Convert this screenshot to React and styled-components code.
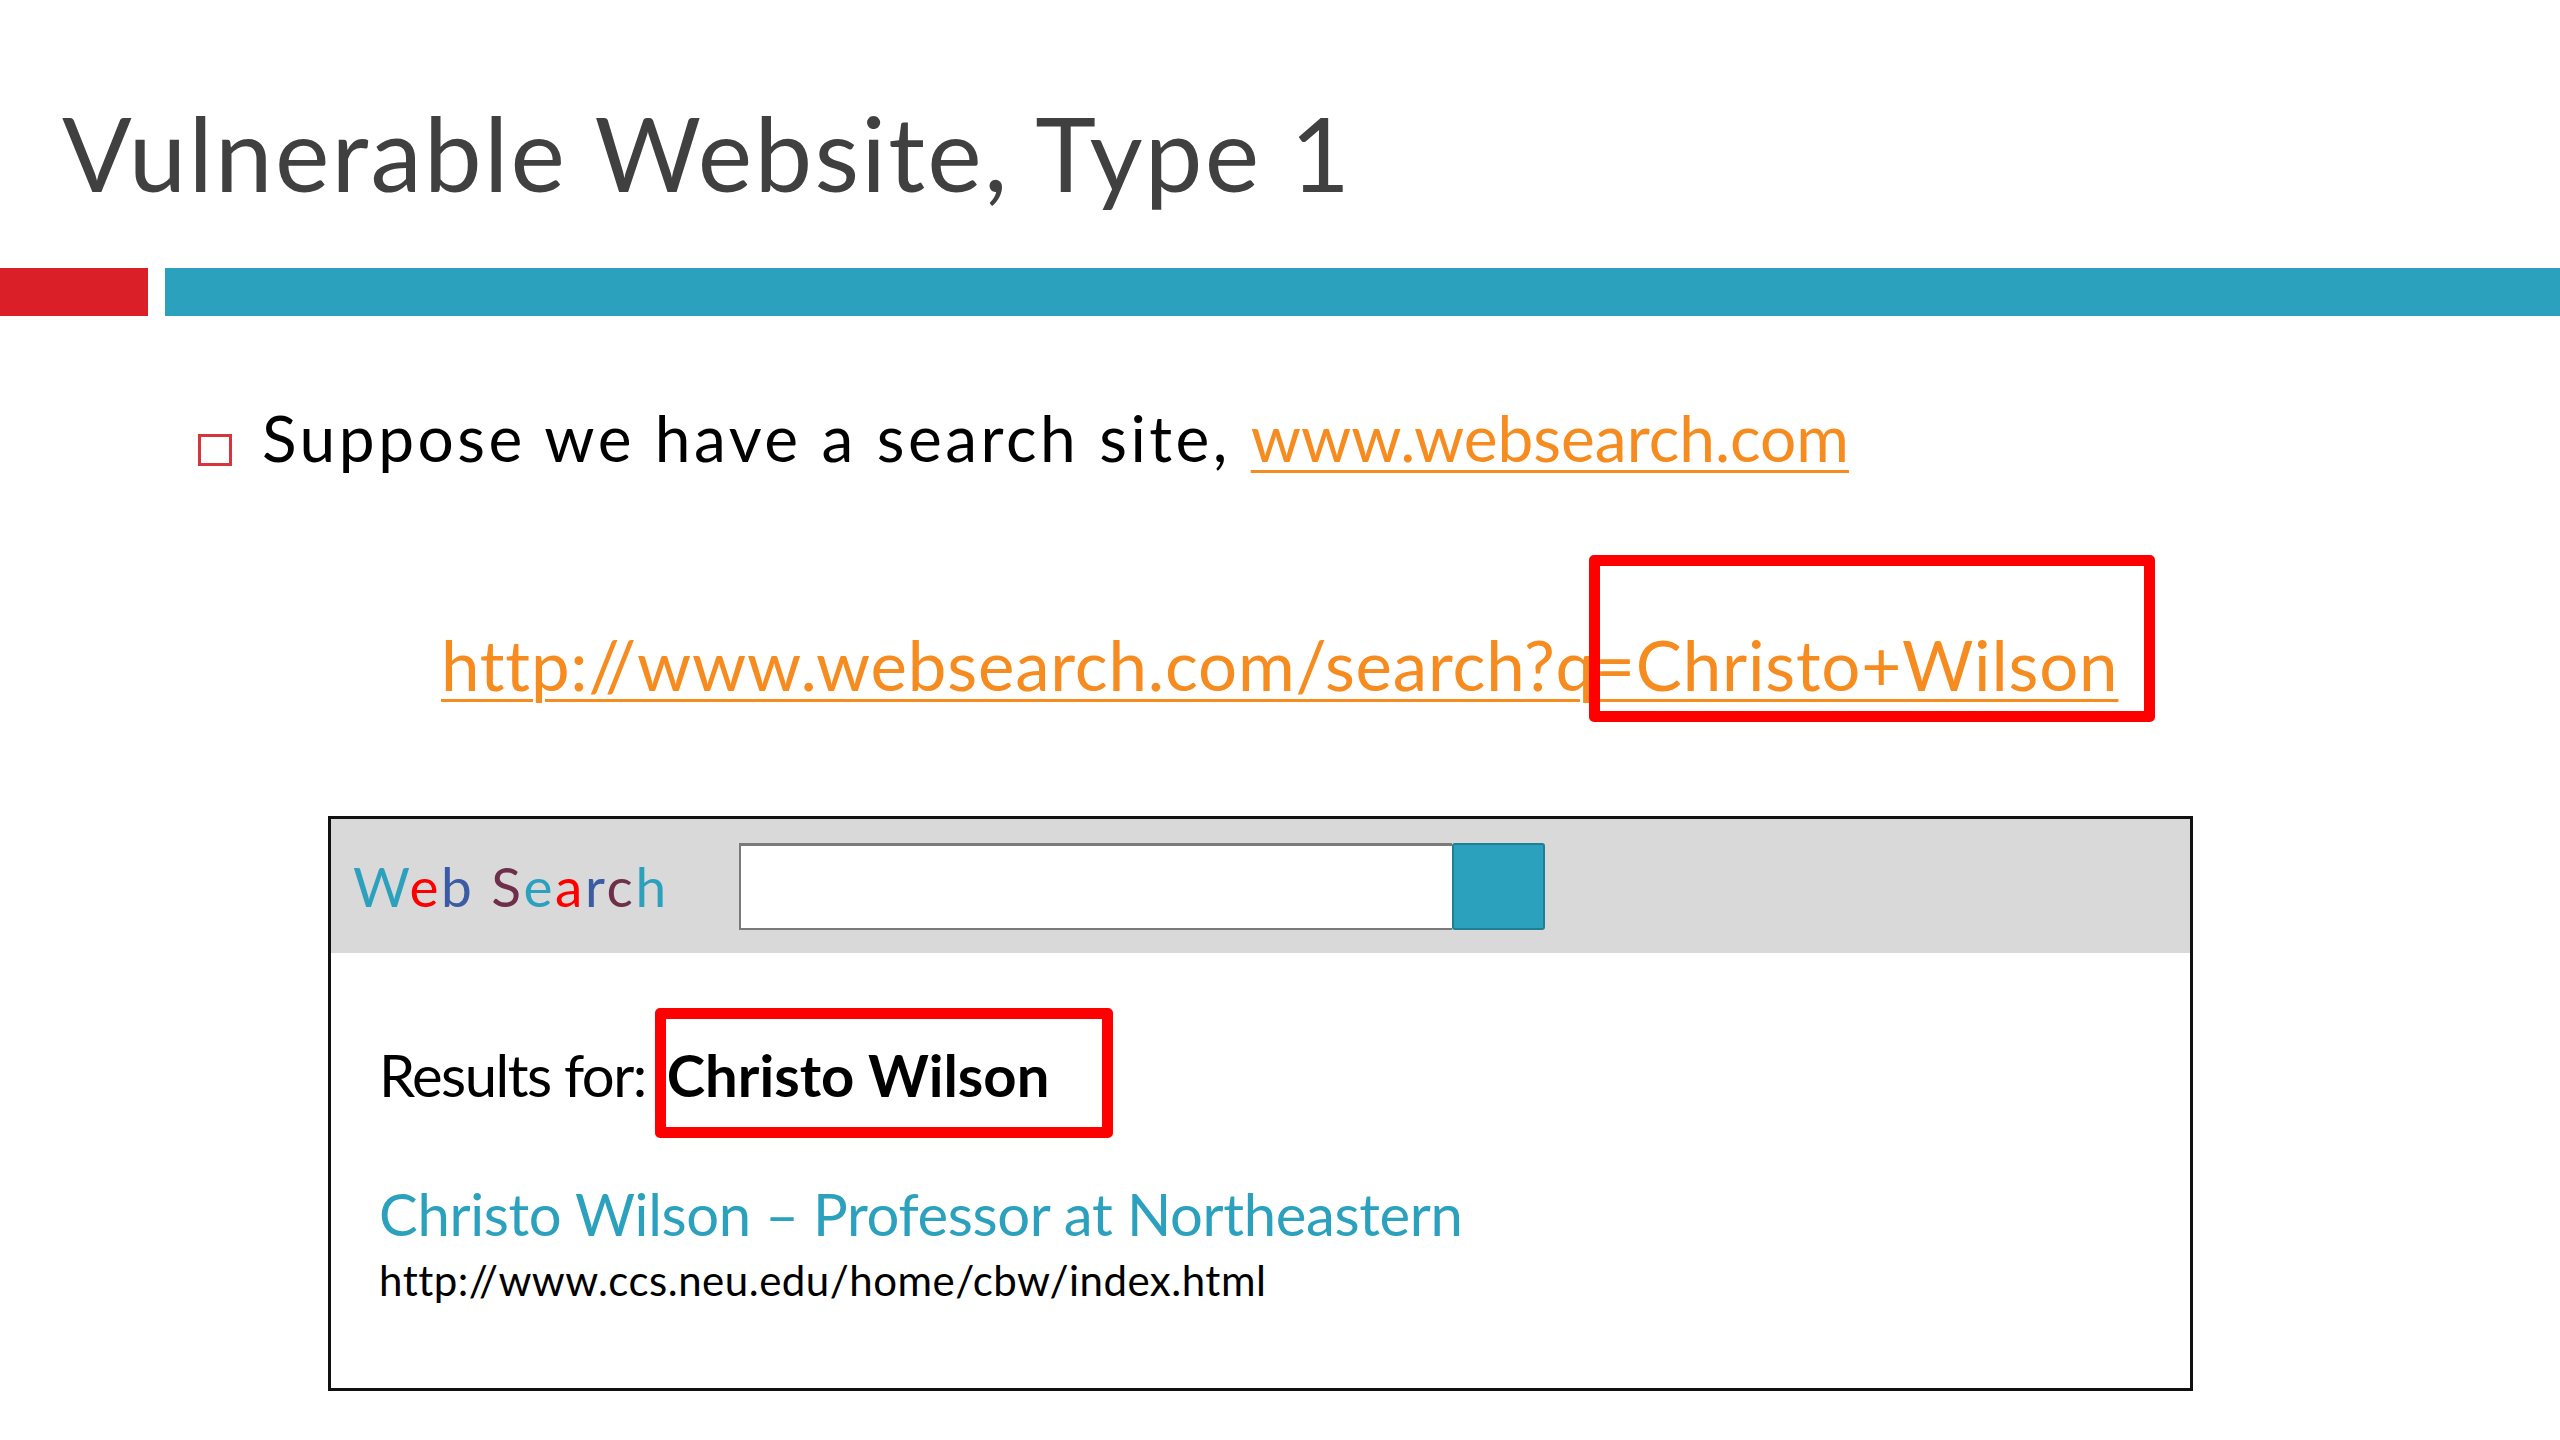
import React from 'react'
import styled, { createGlobalStyle } from 'styled-components'

const GlobalStyle = createGlobalStyle`
body {
  margin: 0;
  background: #ffffff;
  font-family: Lato, "Liberation Sans", sans-serif;
}
`

const Slide = styled.div`
width: 2560px;
height: 1440px;
overflow: hidden;
display: flex;
flex-direction: column;
background: #ffffff;
`

const Title = styled.h1`
margin: 101px 0 0 0;
padding-left: 62px;
font-size: 103px;
line-height: 1;
font-weight: 400;
color: #404040;
letter-spacing: 2.3px;
white-space: nowrap;
`

const Bars = styled.div`
display: flex;
gap: 17px;
height: 48px;
margin-top: 64px;
`

const Bar = styled.div`
background: ${p => p.$color};
width: ${p => p.$width || 'auto'};
flex: ${p => (p.$width ? '0 0 auto' : '1')};
`

const BulletRow = styled.div`
display: flex;
align-items: flex-start;
gap: 30px;
margin-top: 90px;
padding-left: 198px;
`

const Square = styled.div`
width: 34px;
height: 32px;
box-sizing: border-box;
border: 3px solid #d8343c;
margin-top: 28px;
`

const BulletText = styled.div`
font-size: 64px;
line-height: 1;
color: #000;
white-space: nowrap;
letter-spacing: 3.5px;
`

const Link = styled.span`
color: #f68b1f;
text-decoration: underline;
text-decoration-thickness: 3px;
text-underline-offset: 8px;
letter-spacing: ${p => p.$spacing || 'inherit'};
`

const UrlLine = styled.div`
position: relative;
margin-top: 160px;
padding-left: 441px;
font-size: 69px;
line-height: 1;
white-space: nowrap;
letter-spacing: 0.8px;
`

const Marker = styled.div`
position: absolute;
left: ${p => p.$left}px;
top: ${p => p.$top}px;
width: ${p => p.$w}px;
height: ${p => p.$h}px;
box-sizing: border-box;
border: 11px solid #ff0000;
border-radius: 5px;
`

const Widget = styled.div`
margin: 117px 0 0 328px;
width: 1865px;
height: 575px;
box-sizing: border-box;
border: 3px solid #111;
display: flex;
flex-direction: column;
`

const Header = styled.div`
height: 134px;
background: #d9d9d9;
display: flex;
align-items: center;
padding-left: 22px;
`

const Brand = styled.div`
font-size: 55px;
line-height: 1;
white-space: nowrap;
letter-spacing: 2.6px;
`

const Letter = styled.span`
color: ${p => p.$color};
`

const SearchBox = styled.div`
display: flex;
margin-left: 70px;
height: 87px;
`

const Input = styled.div`
width: 713px;
box-sizing: border-box;
background: #fff;
border: 2px solid #7a7a7a;
border-top-width: 3px;
border-right: none;
`

const Button = styled.div`
width: 93px;
box-sizing: border-box;
background: #2ca1be;
border: 2px solid #1f7f97;
border-radius: 3px;
`

const Body = styled.div`
display: flex;
flex-direction: column;
padding: 93px 0 0 48px;
`

const ResultsRow = styled.div`
position: relative;
font-size: 58px;
line-height: 1;
color: #000;
white-space: nowrap;
`

const Label = styled.span`
letter-spacing: -1.5px;
`

const Strong = styled.b`
font-weight: 700;
margin-left: 6px;
`

const ResultTitle = styled.div`
margin-top: 81px;
font-size: 58px;
line-height: 1;
color: #2ca1be;
white-space: nowrap;
letter-spacing: -0.35px;
`

const ResultUrl = styled.div`
margin-top: 16px;
font-size: 42px;
line-height: 1;
color: #000;
white-space: nowrap;
letter-spacing: 0.5px;
`

const brandColors = ['#2ca1be', '#ff0000', '#3b5ba5', '#6e2f4a']

const Brandmark = () => {
  let i = 0
  return (
    <Brand>
      {'Web Search'.split('').map((ch, k) => {
        if (ch === ' ') return <span key={k}> </span>
        const c = brandColors[i % 4]
        i++
        return <Letter key={k} $color={c}>{ch}</Letter>
      })}
    </Brand>
  )
}

const App = () => {
  return (
    <>
      <GlobalStyle />
      <Slide>
        <Title>Vulnerable Website, Type 1</Title>
        <Bars>
          <Bar $color="#da1f28" $width="148px" />
          <Bar $color="#2ca1be" />
        </Bars>
        <BulletRow>
          <Square />
          <BulletText>
            Suppose we have a search site, <Link $spacing="0px">www.websearch.com</Link>
          </BulletText>
        </BulletRow>
        <UrlLine>
          <Link>http://www.websearch.com/search?q=Christo+Wilson</Link>
          <Marker $left={1589} $top={-75} $w={566} $h={167} />
        </UrlLine>
        <Widget>
          <Header>
            <Brandmark />
            <SearchBox>
              <Input />
              <Button />
            </SearchBox>
          </Header>
          <Body>
            <ResultsRow>
              <Label>Results for:</Label> <Strong>Christo Wilson</Strong>
              <Marker $left={276} $top={-38} $w={458} $h={130} />
            </ResultsRow>
            <ResultTitle>Christo Wilson – Professor at Northeastern</ResultTitle>
            <ResultUrl>http://www.ccs.neu.edu/home/cbw/index.html</ResultUrl>
          </Body>
        </Widget>
      </Slide>
    </>
  )
}

export default App
